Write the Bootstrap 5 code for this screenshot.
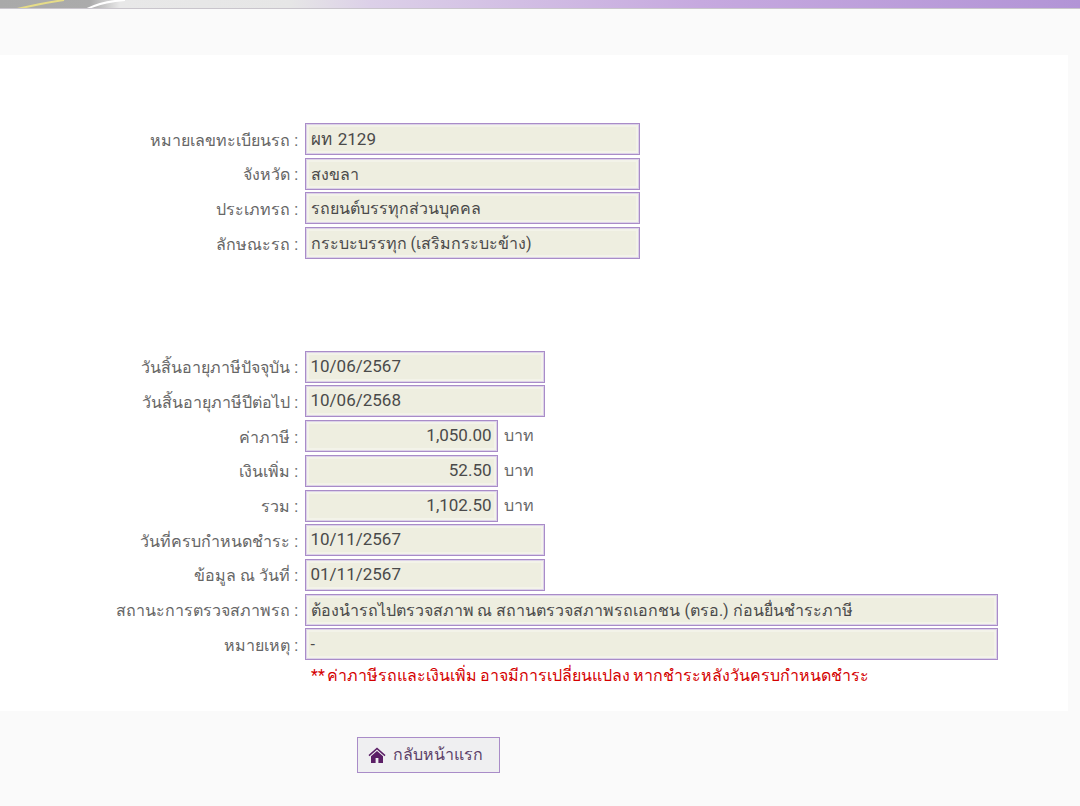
<!DOCTYPE html>
<html lang="th">
<head>
<meta charset="utf-8">
<title>ผลการตรวจสอบ</title>
<link href="https://cdn.jsdelivr.net/npm/bootstrap@5.3.0/dist/css/bootstrap.min.css" rel="stylesheet">
<style>
html,body{height:806px;overflow:hidden}
body{background:#fafafa;font-family:Roboto,sans-serif;font-size:16px;color:#444}
.topstrip{height:9px;border-bottom:1px solid #c9c5cc;background:linear-gradient(90deg,#a9a9a9 0,#ababab 90px,#e8e8e8 120px,#e6e6e6 290px,#dcd0e8 370px,#c6a9df 700px,#b294d6 1080px);overflow:hidden}
.topstrip svg{display:block}
.sheet{margin-top:46px;width:1068px;height:656px;background:#fff;padding-top:68px}
.frow{display:flex;align-items:center;height:32px;margin-bottom:2.7px}
.flabel{width:298px;text-align:right;color:#666;flex:none;margin-right:6.5px;padding-top:3px;line-height:1}
.fbox{height:32px;border:1px solid #a98cc8;background:#eeeee0;box-shadow:inset 0 0 0 1px #dcd2e8,inset 0 0 0 3px #f3f3e9;padding:0 5px;line-height:31px;color:#4a4a4a;white-space:nowrap;overflow:hidden}
.numtxt{font-size:17px;line-height:29px}
.platebox{word-spacing:2px;line-height:31px}
.w-a{width:335px}.w-b{width:240.5px}.w-c{width:193px}.w-d{width:693.5px}
.unit{margin-left:6.5px;color:#666}
.gap-group{height:89px}
.warn{margin-left:311px;color:#d40000;font-size:16px;word-spacing:-1.3px;line-height:26px;height:30px}
.backrow{padding:26px 0 0 357px}
.backbtn{display:inline-flex;align-items:center;gap:7px;width:143px;height:36px;border:1px solid #a98cc8;border-radius:0;background:#efeff1;color:#5c3f68;padding:0 0 0 10px;font-size:16px}
.backbtn:hover{background:#efeff1;color:#5c3f68;border-color:#a98cc8}
</style>
</head>
<body>
<div class="topstrip">
<svg width="360" height="9" viewBox="0 0 360 9"><path d="M17 9C35 5 50 2 64 0" stroke="#e6dc88" stroke-width="2" fill="none"/><path d="M87 9C97 4 110 1 125 0" stroke="#fff" stroke-width="2" fill="none"/></svg>
</div>
<div class="sheet">
<div class="frow"><div class="flabel">หมายเลขทะเบียนรถ :</div><div class="fbox w-a numtxt platebox">ผท 2129</div></div>
<div class="frow"><div class="flabel">จังหวัด :</div><div class="fbox w-a">สงขลา</div></div>
<div class="frow"><div class="flabel">ประเภทรถ :</div><div class="fbox w-a">รถยนต์บรรทุกส่วนบุคคล</div></div>
<div class="frow"><div class="flabel">ลักษณะรถ :</div><div class="fbox w-a">กระบะบรรทุก (เสริมกระบะข้าง)</div></div>
<div class="gap-group"></div>
<div class="frow"><div class="flabel">วันสิ้นอายุภาษีปัจจุบัน :</div><div class="fbox w-b numtxt">10/06/2567</div></div>
<div class="frow"><div class="flabel">วันสิ้นอายุภาษีปีต่อไป :</div><div class="fbox w-b numtxt">10/06/2568</div></div>
<div class="frow"><div class="flabel">ค่าภาษี :</div><div class="fbox w-c text-end numtxt">1,050.00</div><span class="unit">บาท</span></div>
<div class="frow"><div class="flabel">เงินเพิ่ม :</div><div class="fbox w-c text-end numtxt">52.50</div><span class="unit">บาท</span></div>
<div class="frow"><div class="flabel">รวม :</div><div class="fbox w-c text-end numtxt">1,102.50</div><span class="unit">บาท</span></div>
<div class="frow"><div class="flabel">วันที่ครบกำหนดชำระ :</div><div class="fbox w-b numtxt">10/11/2567</div></div>
<div class="frow"><div class="flabel">ข้อมูล ณ วันที่ :</div><div class="fbox w-b numtxt">01/11/2567</div></div>
<div class="frow"><div class="flabel">สถานะการตรวจสภาพรถ :</div><div class="fbox w-d">ต้องนำรถไปตรวจสภาพ ณ สถานตรวจสภาพรถเอกชน (ตรอ.) ก่อนยื่นชำระภาษี</div></div>
<div class="frow"><div class="flabel">หมายเหตุ :</div><div class="fbox w-d">-</div></div>
<div class="warn">** ค่าภาษีรถและเงินเพิ่ม อาจมีการเปลี่ยนแปลง หากชำระหลังวันครบกำหนดชำระ</div>
</div>
<div class="backrow">
<a href="#" class="btn backbtn"><svg width="18" height="16" viewBox="0 0 18 16" aria-hidden="true"><path d="M9 0.5 0.5 8l1 1.2L9 2.6l7.5 6.6 1-1.2z" fill="#5b1f66"/><path fill-rule="evenodd" d="M3 9.2 9 4l6 5.2V16H3zM7.6 11v5h2.8v-5z" fill="#5b1f66"/></svg><span>กลับหน้าแรก</span></a>
</div>
<script src="https://cdn.jsdelivr.net/npm/bootstrap@5.3.0/dist/js/bootstrap.bundle.min.js"></script>
</body>
</html>
